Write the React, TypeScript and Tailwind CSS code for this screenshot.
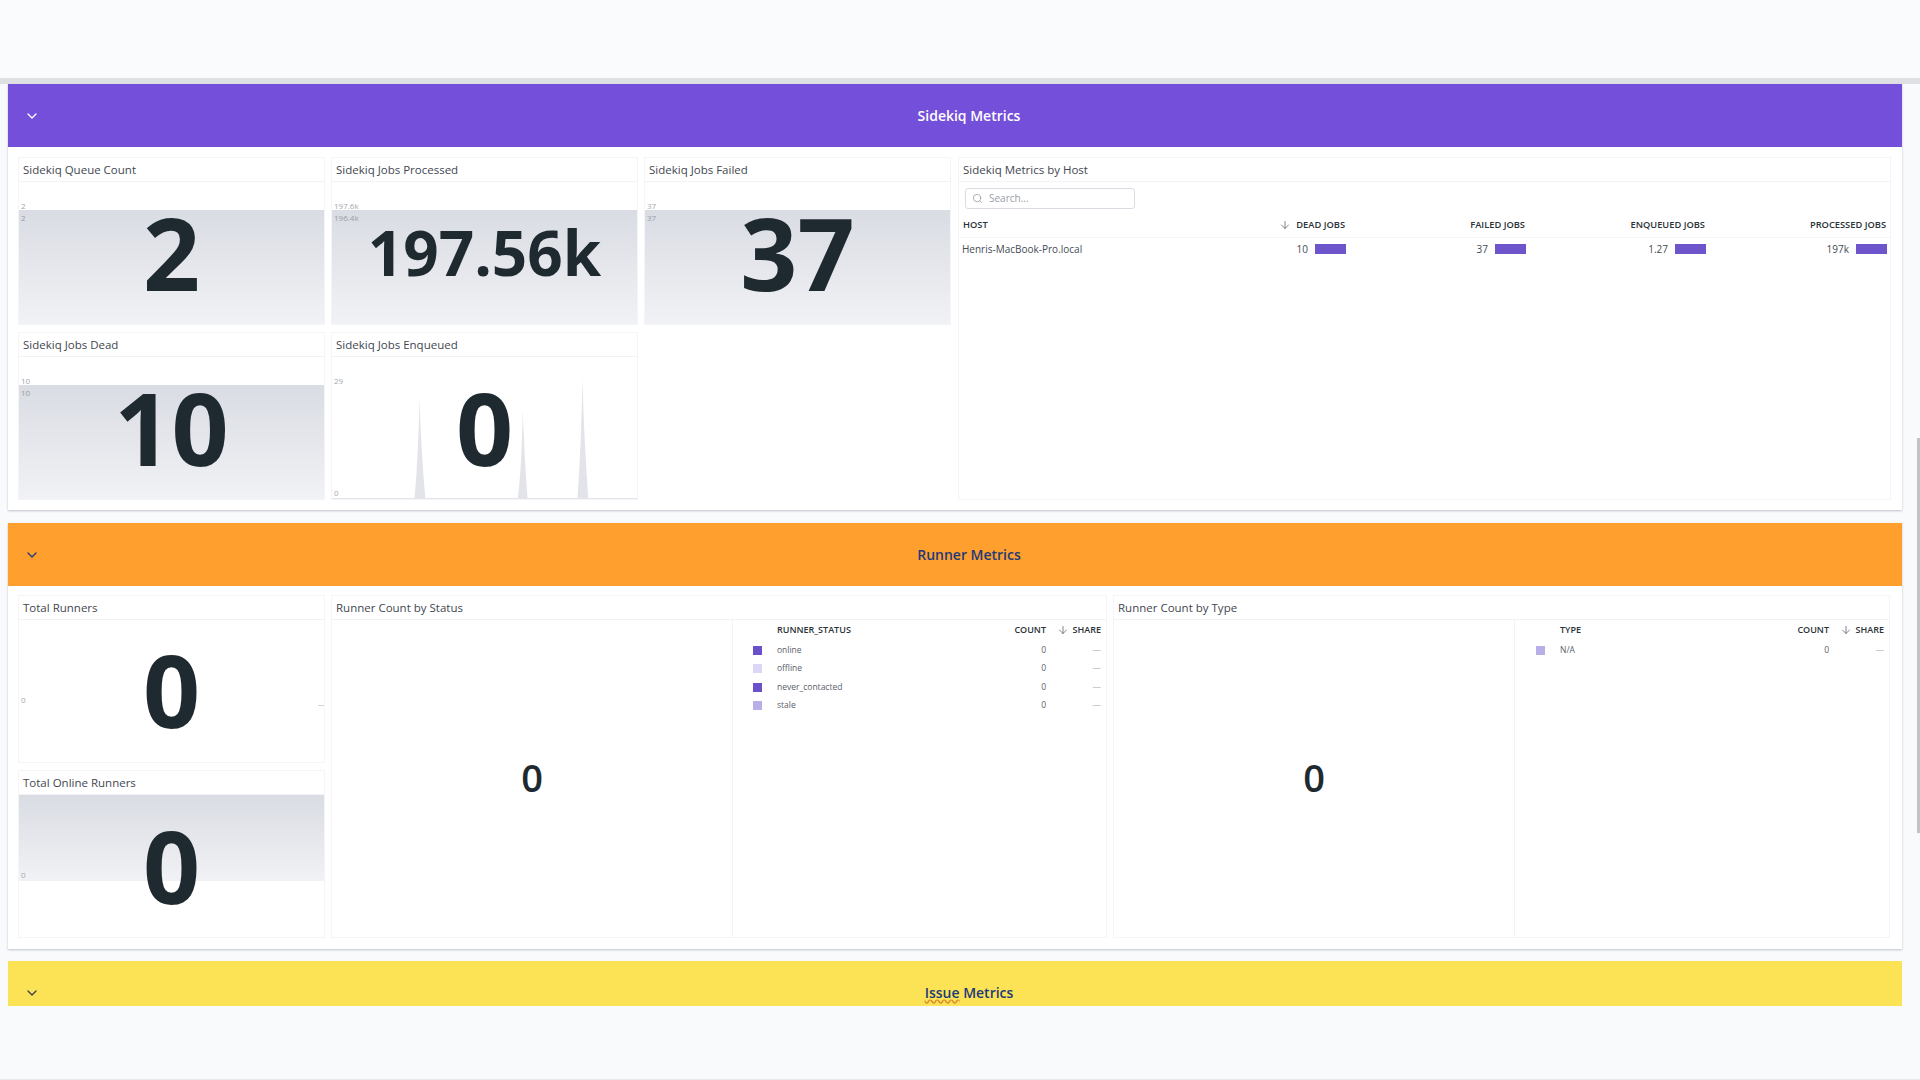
import type { ReactNode } from "react";
import { ChevronDown, ArrowDown, Search } from "lucide-react";

const font = "font-['Open_Sans',sans-serif]";

const SectionHeader = ({ title, bg, text, icon }: { title: ReactNode; bg: string; text: string; icon: string }) => (
  <div className={`flex h-[63px] items-center ${bg}`}>
    <ChevronDown className={`ml-[16px] h-4 w-4 ${icon}`} strokeWidth={2} />
    <div className={`-ml-[4px] flex-1 text-center text-[14px] font-semibold ${text}`}>{title}</div>
  </div>
);

const Title = ({ children }: { children: string }) => (
  <div className="flex h-[24px] items-center border-b border-[#f2f3f6] pl-[4px] pt-[1px] text-[11.5px] text-[#3f4750]">
    {children}
  </div>
);

const BigNumberCard = ({
  title,
  value,
  size = "text-[100px]",
  lift = "pb-[2px]",
  top = 28,
  bottom = 0,
  labels,
  children,
}: {
  title: string;
  value: string;
  size?: string;
  lift?: string;
  top?: number;
  bottom?: number;
  labels: [string, string?];
  children?: ReactNode;
}) => (
  <div className="flex h-[168px] w-[307px] flex-col border border-[#f4f5f8] bg-white">
    <Title>{title}</Title>
    <div className="relative flex-1 overflow-hidden">
      {top >= 0 && (
        <div
          className="absolute inset-x-0 bg-gradient-to-b from-[#d9dce3] to-[#f1f2f5]"
          style={{ top, bottom }}
        />
      )}
      {children}
      <span className="absolute left-[2px] top-[18px] text-[8px] text-[#a5a8ad]">{labels[0]}</span>
      {labels[1] && <span className="absolute left-[2px] top-[30px] text-[8px] text-[#9a9da3]">{labels[1]}</span>}
      <div className={`absolute inset-0 flex items-center justify-center font-bold leading-none text-[#1f2a30] ${size} ${lift}`}>
        {value}
      </div>
    </div>
  </div>
);

const HostColumns = "grid grid-cols-[1fr_180px_180px_180px_181px] pl-[4px] pr-[3px]";

const hostRow = [
  ["10"],
  ["37"],
  ["1.27"],
  ["197k"],
];

const HostPanel = () => (
  <div className="flex h-[343px] w-[933px] flex-col border border-[#f4f5f8] bg-white">
    <Title>Sidekiq Metrics by Host</Title>
    <div className="ml-[6px] mt-[6px] flex h-[21px] w-[170px] items-center gap-[6px] rounded-[3px] border border-[#d9dce3] pl-[6px] text-[10px] text-[#9a9ea6]">
      <Search className="h-[11px] w-[11px] text-[#8a8e96]" strokeWidth={1.5} />
      Search...
    </div>
    <div className={`${HostColumns} mt-[9px] items-center text-[9.3px] font-semibold text-[#2b3238]`}>
      <span>HOST</span>
      <span className="flex items-center justify-end gap-[5px] pr-[1px]">
        <ArrowDown className="h-3 w-3 text-[#555c66]" strokeWidth={1.5} />
        DEAD JOBS
      </span>
      <span className="pr-[1px] text-right">FAILED JOBS</span>
      <span className="pr-[1px] text-right">ENQUEUED JOBS</span>
      <span className="pr-[1px] text-right">PROCESSED JOBS</span>
    </div>
    <div className={`${HostColumns} mt-[5px] h-[24px] items-center border-t border-[#f4f5f8] text-[10px] text-[#444b55]`}>
      <span className="-ml-[1px]">Henris-MacBook-Pro.local</span>
      {hostRow.map(([v]) => (
        <span key={v} className="flex items-center justify-end gap-[7px]">
          {v}
          <span className="h-[10px] w-[31px] bg-[#6f55cc]" />
        </span>
      ))}
    </div>
  </div>
);

const LegendTable = ({
  head,
  rows,
  pad,
}: {
  head: string;
  rows: [string, string][];
  pad: string;
}) => (
  <div className={`h-full border-l border-[#f2f3f6] pr-[5px] pt-[1px] ${pad}`}>
    <div className="grid h-[18px] grid-cols-[24px_1fr_auto_55px] items-center text-[9px] font-semibold text-[#2b3238]">
      <span />
      <span>{head}</span>
      <span className="text-right">COUNT</span>
      <span className="flex items-center justify-end gap-[4px]">
        <ArrowDown className="h-3 w-3 text-[#555c66]" strokeWidth={1.5} />
        SHARE
      </span>
    </div>
    <div className="mt-[2px]">
      {rows.map(([name, color]) => (
        <div key={name} className="grid h-[18.5px] grid-cols-[24px_1fr_auto_55px] items-center text-[8.5px] text-[#5a616b]">
          <span className={`h-[9px] w-[9px] ${color}`} />
          <span>{name}</span>
          <span className="text-right">0</span>
          <span className="text-right text-[#b4b7bd]">—</span>
        </div>
      ))}
    </div>
  </div>
);

const RunnerPanel = ({
  title,
  width,
  left,
  children,
}: {
  title: string;
  width: string;
  left: string;
  children: ReactNode;
}) => (
  <div className={`flex h-[343px] flex-col border border-[#f4f5f8] bg-white ${width}`}>
    <Title>{title}</Title>
    <div className="flex flex-1">
      <div className={`flex items-center justify-center pb-[3px] text-[38px] font-semibold leading-none text-[#1f2a30] ${left}`}>
        0
      </div>
      <div className="flex-1">{children}</div>
    </div>
  </div>
);

export default function App() {
  return (
    <div className={`relative flex h-screen flex-col overflow-hidden border-b border-[#e8e9ec] bg-[#f9fafc] ${font}`}>
      <div className="h-[84px] shrink-0 border-b-[6px] border-[#dfe0e4] bg-[#fafbfd]" />

      <div className="mx-[8px] w-[1894px] bg-white shadow-[0_1px_2px_rgba(120,125,150,0.45)]">
        <SectionHeader title="Sidekiq Metrics" bg="bg-[#744fd9]" text="text-white" icon="text-white" />
        <div className="flex gap-[7px] px-[10px] py-[10px]">
          <div className="flex w-[933px] flex-wrap content-start gap-x-[6px] gap-y-[7px]">
            <BigNumberCard title="Sidekiq Queue Count" value="2" labels={["2", "2"]} />
            <BigNumberCard title="Sidekiq Jobs Processed" value="197.56k" size="text-[62px]" labels={["197.6k", "196.4k"]} />
            <BigNumberCard title="Sidekiq Jobs Failed" value="37" labels={["37", "37"]} />
            <BigNumberCard title="Sidekiq Jobs Dead" value="10" labels={["10", "10"]} />
            <BigNumberCard title="Sidekiq Jobs Enqueued" value="0" top={-1} labels={["29"]}>
              <svg className="absolute inset-0 h-full w-full" viewBox="0 0 307 144" preserveAspectRatio="none">
                <path
                  d="M83 144 Q87 100 88 42 Q90 100 94 144 Z M187 144 Q191 110 192 53 Q194 110 197 144 Z M247 144 Q251 90 252 22 Q254 90 258 144 Z"
                  fill="#e2e4ea"
                />
                <path d="M0 143.5 H307" stroke="#e3e5ea" strokeWidth="1" />
              </svg>
              <span className="absolute bottom-0 left-[2px] text-[8px] text-[#a5a8ad]">0</span>
            </BigNumberCard>
          </div>
          <HostPanel />
        </div>
      </div>

      <div className="mx-[8px] mt-[13px] w-[1894px] bg-white shadow-[0_1px_2px_rgba(120,125,150,0.45)]">
        <SectionHeader title="Runner Metrics" bg="bg-[#ff9f2e]" text="text-[#1d3a7a]" icon="text-[#1d3a7a]" />
        <div className="flex gap-[6px] pb-[11px] pl-[10px] pt-[9px]">
          <div className="flex w-[307px] flex-col gap-[7px]">
            <BigNumberCard title="Total Runners" value="0" lift="pb-[5px]" top={-1} labels={["", ""]}>
              <span className="absolute left-[2px] top-[74px] text-[8px] text-[#a5a8ad]">0</span>
              <span className="absolute right-0 top-[85px] h-px w-[6px] bg-[#d5d7dc]" />
            </BigNumberCard>
            <BigNumberCard title="Total Online Runners" value="0" top={0} bottom={56} labels={["", ""]}>
              <span className="absolute left-[2px] top-[74px] text-[8px] text-[#a5a8ad]">0</span>
            </BigNumberCard>
          </div>
          <RunnerPanel title="Runner Count by Status" width="w-[776px]" left="w-[400px]">
            <LegendTable
              head="RUNNER_STATUS"
              pad="pl-[20px]"
              rows={[
                ["online", "bg-[#6b51c9]"],
                ["offline", "bg-[#dcd7f4]"],
                ["never_contacted", "bg-[#6b51c9]"],
                ["stale", "bg-[#b9aee8]"],
              ]}
            />
          </RunnerPanel>
          <RunnerPanel title="Runner Count by Type" width="w-[777px]" left="w-[400px]">
            <LegendTable head="TYPE" pad="pl-[21px]" rows={[["N/A", "bg-[#b9aee8]"]]} />
          </RunnerPanel>
        </div>
      </div>

      <div className="mx-[8px] mt-[12px] h-[45px] w-[1894px] overflow-hidden bg-[#fce355]">
        <SectionHeader
          title={
            <>
              <span className="underline decoration-[#d98a2b] decoration-wavy">Issue</span> Metrics
            </>
          }
          bg="bg-[#fce355]"
          text="text-[#1d3a7a]"
          icon="text-[#3a3f55]"
        />
      </div>

      <div className="absolute right-0 top-[438px] h-[395px] w-[3px] bg-[#c2c3c7]" />
    </div>
  );
}
